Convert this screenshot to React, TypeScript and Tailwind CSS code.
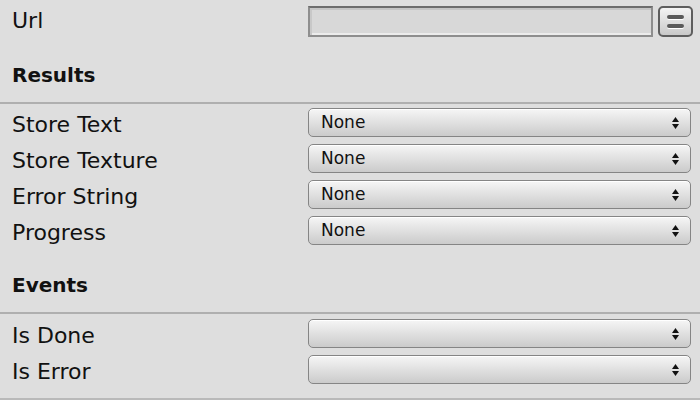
import React from "react";

const font = { fontFamily: '"DejaVu Sans", "Liberation Sans", sans-serif' };

function Arrows() {
  return (
    <svg width="7" height="12" viewBox="0 0 7 12" className="block">
      <polygon points="3.5,0 7,5 0,5" fill="#111" />
      <polygon points="0,7 7,7 3.5,12" fill="#111" />
    </svg>
  );
}

function Dropdown({ value }: { value?: string }) {
  return (
    <div className="w-[383px] h-[29px] rounded-[5px] border border-[#858585] bg-gradient-to-b from-[#f6f6f6] to-[#cbcbcb] flex items-center pl-[12px] pr-[11px] shadow-[inset_0_1px_0_#ffffff]">
      <span className="flex-1 text-[17px] text-[#111] leading-none">{value ?? ""}</span>
      <Arrows />
    </div>
  );
}

function Row({ label, value }: { label: string; value?: string }) {
  return (
    <div className="h-[36px] flex items-start">
      <div className="w-[308px] pl-[12px] pt-[5px] text-[22px] leading-[24px] text-[#111]">{label}</div>
      <Dropdown value={value} />
    </div>
  );
}

export default function App() {
  return (
    <div className="w-[700px] h-[400px] bg-[#dedede] flex flex-col overflow-hidden" style={font}>
      {/* Url row */}
      <div className="h-[43px] pt-[6px] flex items-start">
        <div className="w-[308px] pl-[12px] pt-[3px] text-[22px] leading-[24px] text-[#111]">Url</div>
        <div className="w-[345px] h-[31px] border-[2px] border-t-[#6c6c6c] border-x-[#8e8e8e] border-b-[#8e8e8e] bg-[#d8d8d8] shadow-[inset_0_2px_0_#c4c4c4,inset_2px_0_0_#c8c8c8,inset_0_-2px_0_#ececec]" />
        <div className="ml-[5px] w-[35px] h-[31px] rounded-[5px] border-[2px] border-[#5e5e5e] bg-gradient-to-b from-[#f4f4f4] to-[#c9c9c9] flex flex-col items-center justify-center gap-[5px]">
          <div className="w-[17px] h-[4px] rounded-[2px] bg-[#5a5a5a] shadow-[0_1px_0_#ffffff]" />
          <div className="w-[17px] h-[4px] rounded-[2px] bg-[#5a5a5a] shadow-[0_1px_0_#ffffff]" />
        </div>
      </div>

      {/* Results header */}
      <div className="h-[59px] pl-[12px] pt-[20px] text-[20px] font-bold leading-[24px] text-[#111]">Results</div>
      <div className="h-[2px] bg-[#afafaf]" />
      <div className="pt-[4px] flex flex-col">
        <Row label="Store Text" value="None" />
        <Row label="Store Texture" value="None" />
        <Row label="Error String" value="None" />
        <Row label="Progress" value="None" />
      </div>

      {/* Events header */}
      <div className="h-[60px] pl-[12px] pt-[21px] text-[20px] font-bold leading-[24px] text-[#111]">Events</div>
      <div className="h-[2px] bg-[#afafaf]" />
      <div className="pt-[5px] flex flex-col">
        <Row label="Is Done" />
        <Row label="Is Error" />
      </div>
      <div className="flex-1" />
      <div className="h-[2px] bg-[#b9b9b9]" />
    </div>
  );
}
